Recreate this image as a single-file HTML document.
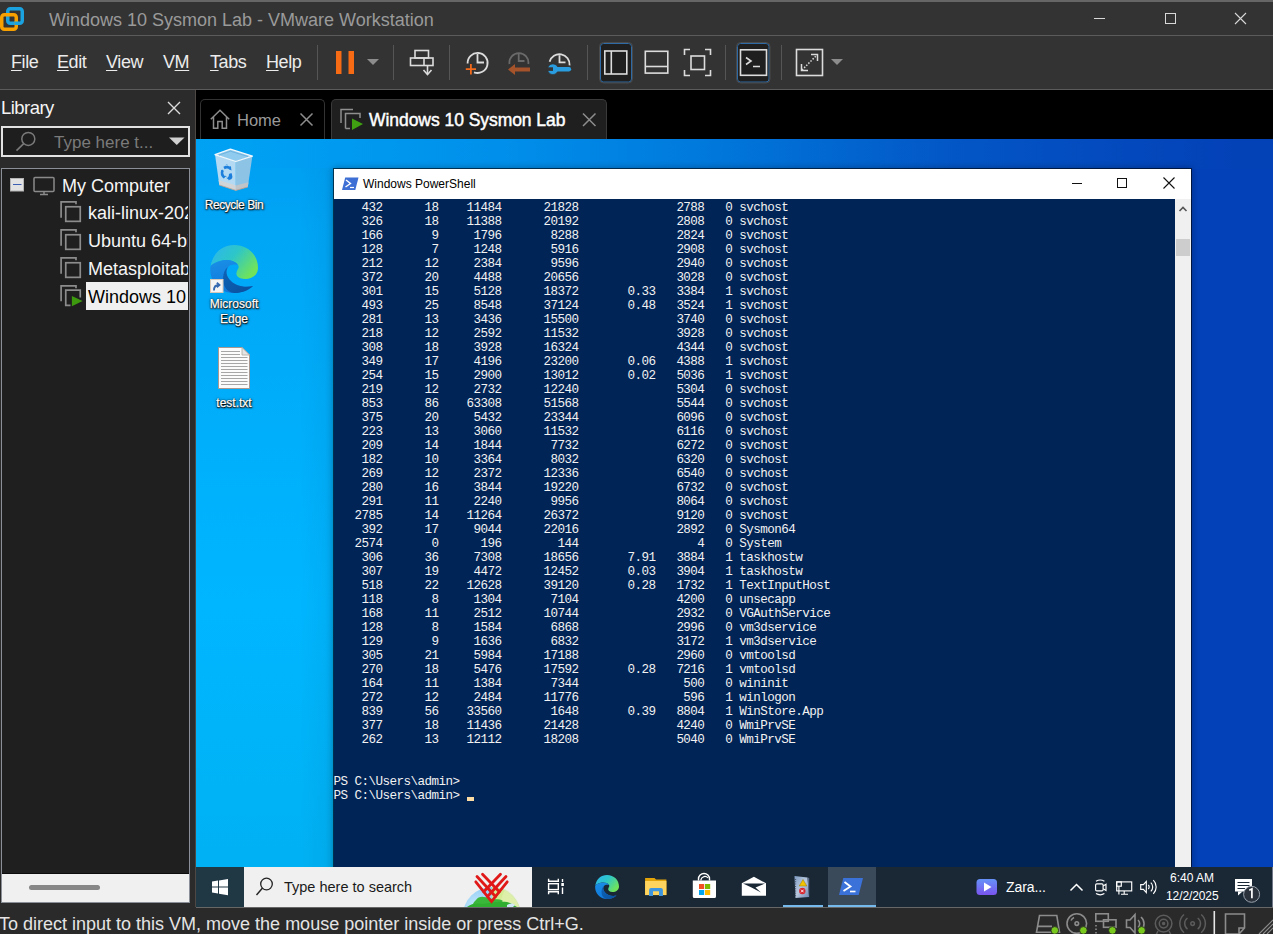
<!DOCTYPE html>
<html><head><meta charset="utf-8">
<style>
*{margin:0;padding:0;box-sizing:border-box}
html,body{width:1273px;height:934px;overflow:hidden;background:#2b2b2b;font-family:"Liberation Sans",sans-serif;position:relative}
.a{position:absolute}
.nw{white-space:nowrap}
svg{position:absolute;overflow:visible}
#title{left:0;top:0;width:1273px;height:36px;background:#333;border-top:2px solid #666;border-bottom:1px solid #5b5b5b}
#ttxt{left:49px;top:10px;font-size:18px;line-height:20px;color:#9a9a9a}
#menu{left:0;top:36px;width:1273px;height:54px;background:#333;border-bottom:1px solid #5b5b5b}
.mi{top:52px;font-size:18px;line-height:20px;color:#ececec;letter-spacing:-0.4px}
.mi u{text-decoration:underline;text-decoration-thickness:1px;text-underline-offset:1.5px}
.sep{width:1px;background:#555;top:45px;height:35px}
#lib{left:0;top:90px;width:190px;height:817px;background:#2b2b2b}
#vmarea{left:196px;top:90px;width:1077px;height:49px;background:#000}
#desk{left:196px;top:139px;width:1077px;height:768px;background:linear-gradient(90deg,#00a2f4 0,#009ef2 94px,#008fea 308px,#0079dc 508px,#0356c6 758px,#0341b7 1038px,#0341b6 1077px);overflow:hidden}
#dleft{left:0;top:29px;width:137px;height:699px;background:linear-gradient(90deg,rgba(0,0,0,0) 75%,rgba(0,10,40,0.05) 100%),linear-gradient(180deg,#00a0f3 0,#00a6f6 66px,#00b6ff 436px,#00b2f4 686px)}
#dright{left:995px;top:30px;width:82px;height:698px;background:#0341b8}
#status{left:0;top:908px;width:1273px;height:26px;background:#2a2a2a}
#ps{left:137px;top:29px;width:859px;height:740px;background:#fff;border:1px solid rgba(0,0,0,.6);background-clip:padding-box;box-shadow:0 0 7px rgba(0,0,0,0.3)}
#con{left:0;top:30px;width:841px;height:710px;background:#012456;overflow:hidden}
#con pre{font-family:"Liberation Mono",monospace;font-size:12.6px;letter-spacing:-0.56px;line-height:14px;color:#f2f2f2;position:absolute;left:-0.5px;top:2px}
#psb{left:841px;top:30px;width:16px;height:710px;background:#f0f0f0}
#task{left:0;top:728px;width:1077px;height:40px;background:#1e2a38}
.dl{color:#fff;font-size:12px;line-height:15px;text-align:center;-webkit-text-stroke:0.25px #fff;text-shadow:0 1px 1px #000,0 0 1px #000,1px 1px 2px rgba(0,0,0,.8),0 0 3px rgba(0,0,0,.5);width:80px}

</style></head><body>
<svg width="0" height="0" style="position:absolute;left:0;top:0">
<defs>
  <linearGradient id="egt" x1="0" y1="0" x2="1" y2="0.6"><stop offset="0" stop-color="#2bb5f2"/><stop offset="0.5" stop-color="#2ec6c8"/><stop offset="1" stop-color="#70e35a"/></linearGradient>
  <linearGradient id="egb" x1="0" y1="0" x2="0.3" y2="1"><stop offset="0" stop-color="#1a8fe6"/><stop offset="1" stop-color="#0f78dc"/></linearGradient>
  <linearGradient id="egd" x1="0" y1="0" x2="1" y2="1"><stop offset="0" stop-color="#0d63b8"/><stop offset="1" stop-color="#0b4f9c"/></linearGradient>
  <symbol id="edge" viewBox="0 0 24 24">
    <path d="M0.3 10.5 C1.5 4 6 0 12 0 C19 0 24 5 24 11.5 C24 15 21 17 17.5 17 C14.5 17 13 15.5 13.2 14 C13.5 12 15 11.5 14 10 C12.5 7.5 8 7 5 8 C3 8.6 1.2 9.5 0.3 10.5 Z" fill="url(#egt)"/>
    <path d="M0.3 10.5 C-0.8 17 4 24 12 24 C15 24 19 23 21.5 20.5 C19 21.2 16 21 13.5 20 C9 18 7 14 9 11 C10 9.8 12 9.5 14 10 C12.5 7.5 8 7 5 8 C3 8.6 1.2 9.5 0.3 10.5 Z" fill="url(#egb)"/>
    <path d="M9 11 C7 14 9 18 13.5 20 C16 21 19 21.2 21.5 20.5 C19 23 15 24.2 12 24 C8.5 23.6 6.3 20.5 6.5 16.5 C6.7 13.8 7.5 12 9 11 Z" fill="url(#egd)"/>
  </symbol>
</defs></svg>
<div id="title" class="a"></div>
<svg style="left:0;top:0" width="30" height="34">
  <rect x="7.75" y="8.75" width="14.5" height="14.5" rx="2.5" fill="none" stroke="#1aa3e0" stroke-width="3.5"/>
  <rect x="1.75" y="14.75" width="14.5" height="14.5" rx="2.5" fill="none" stroke="#f7a000" stroke-width="3.5"/>
  <rect x="14.5" y="21.5" width="4" height="3.5" fill="#1aa3e0"/>
</svg>
<div id="ttxt" class="a nw">Windows 10 Sysmon Lab - VMware Workstation</div>
<svg style="left:1090px;top:10px" width="170" height="18">
  <line x1="4" y1="8.5" x2="15" y2="8.5" stroke="#d8d8d8" stroke-width="1"/>
  <rect x="75.5" y="3.5" width="10" height="10" fill="none" stroke="#d8d8d8" stroke-width="1"/>
  <path d="M145 3 L156 14 M156 3 L145 14" stroke="#d8d8d8" stroke-width="1.1"/>
</svg>
<div id="menu" class="a"></div>
<div class="a mi nw" style="left:11px"><u>F</u>ile</div>
<div class="a mi nw" style="left:57px"><u>E</u>dit</div>
<div class="a mi nw" style="left:106px"><u>V</u>iew</div>
<div class="a mi nw" style="left:163px">V<u>M</u></div>
<div class="a mi nw" style="left:210px"><u>T</u>abs</div>
<div class="a mi nw" style="left:266px"><u>H</u>elp</div>
<div class="a sep" style="left:317px"></div>
<div class="a sep" style="left:393px"></div>
<div class="a sep" style="left:449px"></div>
<div class="a sep" style="left:587px"></div>
<div class="a sep" style="left:725px"></div>
<div class="a sep" style="left:781px"></div>
<!-- toolbar icons -->
<svg style="left:0;top:0" width="1273" height="90">
  <rect x="336" y="51" width="5.5" height="23" fill="#f76b15"/>
  <rect x="348.5" y="51" width="5.5" height="23" fill="#f76b15"/>
  <path d="M367 59 L379 59 L373 65 Z" fill="#8c8c8c"/>
  <g fill="none" stroke="#dcdcdc" stroke-width="1.6">
    <rect x="415" y="50.5" width="13.5" height="7.5"/>
    <rect x="410.5" y="58" width="22.5" height="7.5"/>
    <line x1="424" y1="58" x2="424" y2="65.5"/>
    <line x1="427.5" y1="65.5" x2="427.5" y2="74"/>
    <path d="M423.5 70 L427.5 74.5 L431.5 70"/>
  </g>
  <g fill="none" stroke="#dcdcdc" stroke-width="1.8">
    <path d="M467.6 63.5 A10 10 0 1 1 474 72.3"/>
    <path d="M477.5 54 L477.5 62.5 L484 62.5"/>
  </g>
  <path d="M470.9 64 V74.5 M465.8 69.2 H476" stroke="#f26a1b" stroke-width="1.8"/>
  <g fill="none" stroke="#6a6a6a" stroke-width="1.8">
    <path d="M509.5 64 A9.5 9.5 0 1 1 528.3 64"/>
    <path d="M518.7 53 L518.7 61 L524.5 61"/>
  </g>
  <path d="M530 67.5 H515 V64 L508 69.5 L515 75 V71.5 H530 Z" fill="#a5532a"/>
  <g fill="none" stroke="#dcdcdc" stroke-width="1.8">
    <path d="M549.6 61.8 A10.2 10.2 0 0 1 569.6 65.4"/>
    <path d="M559.5 55.3 V62.4 H565.5"/>
  </g>
  <circle cx="552.9" cy="69.2" r="5.3" fill="#2a9de0" stroke="#333" stroke-width="0.6"/>
  <path d="M553 67.1 H569 A2.15 2.15 0 0 1 569 71.4 H553 Z" fill="#2a9de0"/>
  <rect x="546.5" y="67.3" width="6.5" height="3.6" fill="#333"/>
  <rect x="600.5" y="43.5" width="31" height="38.5" rx="3" fill="#1f1f1f" stroke="#2d6aa6" stroke-width="1"/>
  <rect x="599.5" y="42.5" width="33" height="40.5" rx="4" fill="none" stroke="#4a4a4a" stroke-width="1"/>
  <g fill="none" stroke="#dcdcdc" stroke-width="1.6">
    <rect x="604.8" y="51" width="22" height="23"/>
    <line x1="611.3" y1="51" x2="611.3" y2="74"/>
    <rect x="645.3" y="51.3" width="22.5" height="21.8"/>
    <line x1="645.3" y1="66.5" x2="667.8" y2="66.5"/>
    <path d="M684.5 55 V49.5 H690 M705 49.5 H710.5 V55 M710.5 70 V75.5 H705 M690 75.5 H684.5 V70"/>
    <rect x="691" y="56" width="13.5" height="13.5"/>
  </g>
  <rect x="737.5" y="43.5" width="31.5" height="38.5" rx="3" fill="#1f1f1f" stroke="#2d6aa6" stroke-width="1"/>
  <rect x="736.5" y="42.5" width="33.5" height="40.5" rx="4" fill="none" stroke="#4a4a4a" stroke-width="1"/>
  <g fill="none" stroke="#dcdcdc" stroke-width="1.6">
    <rect x="740.5" y="49.8" width="26" height="25.5"/>
    <path d="M746 57.5 L751 61 L746 64.5 M753 66.5 H760"/>
    <rect x="796.5" y="49.5" width="26" height="26"/>
  </g>
  <path d="M802 70 L817 55" stroke="#dcdcdc" stroke-width="1.5" stroke-dasharray="1.5 1.5" fill="none"/>
  <path d="M801.5 64 V70.5 H808 M811 54.5 H817.5 V61" stroke="#dcdcdc" stroke-width="1.5" fill="none"/>
  <path d="M831 59 L843 59 L837 65 Z" fill="#8c8c8c"/>
</svg>
<div id="lib" class="a"></div>
<div class="a nw" style="left:1px;top:98px;font-size:18.5px;letter-spacing:-0.55px;line-height:20px;color:#f4f4f4">Library</div>
<svg style="left:160px;top:96px" width="30" height="26"><path d="M8 6 L20 18 M20 6 L8 18" stroke="#dcdcdc" stroke-width="1.4"/></svg>
<div class="a" style="left:1px;top:126px;width:189px;height:31px;border:2px solid #e2e2e2;background:#1e1e1e"></div>
<svg style="left:0;top:126px" width="190" height="31">
  <circle cx="28.3" cy="12.9" r="6.5" fill="none" stroke="#7a7a7a" stroke-width="1.5"/>
  <line x1="23.7" y1="17.6" x2="16.5" y2="24.6" stroke="#7a7a7a" stroke-width="1.6"/>
  <path d="M169 11.5 L184.5 11.5 L176.75 19 Z" fill="#d0d0d0"/>
</svg>
<div class="a nw" style="left:54px;top:133px;font-size:17px;line-height:20px;color:#7a7a7a">Type here t...</div>
<div class="a" style="left:1px;top:168px;width:189px;height:735px;border:1px solid #8b8f98;background:#1f1f1f;overflow:hidden">
  <div class="a" style="left:0;top:704px;width:187px;height:29px;background:#f0f0f0;border-top:1px solid #0c0c0c"></div>
  <div class="a" style="left:27px;top:716px;width:71px;height:5px;border-radius:3px;background:#878787"></div>
</div>
<svg style="left:0;top:168px" width="190" height="150">
  <rect x="10.5" y="10.5" width="13" height="12.5" fill="#e2e2e2" stroke="#b5b5b5" stroke-width="1"/>
  <line x1="13" y1="16.5" x2="21.5" y2="16.5" stroke="#3c5fb4" stroke-width="1"/>
  <g fill="none" stroke="#8a8a8a" stroke-width="1.5">
    <rect x="34" y="9.5" width="20" height="14" rx="1"/>
    <path d="M44 23.5 V26 M40 26.5 H48"/>
  </g>
  <g fill="none" stroke="#8c8c8c" stroke-width="1.7">
    <path d="M61.1 49.70 V33.85 H76 V36.30"/><rect x="65.75" y="38.75" width="14.5" height="14.6"/>
    <path d="M61.1 77.70 V61.85 H76 V64.30"/><rect x="65.75" y="66.75" width="14.5" height="14.6"/>
    <path d="M61.1 105.70 V89.85 H76 V92.30"/><rect x="65.75" y="94.75" width="14.5" height="14.6"/>
    <path d="M61.1 133.20 V117.85 H76 V120.30"/><path d="M70.5 137.35 H65.75 V122.15 H80.25 V129.50"/>
  </g>
  <path d="M71.9 127.9 L82.6 133 L71.9 138.2 Z" fill="#3d9a0e"/>
</svg>
<div class="a nw" style="left:62px;top:176px;font-size:18px;line-height:20px;color:#f6f6f6">My Computer</div>
<div class="a" style="left:86px;top:196px;width:102px;height:115px;overflow:hidden">
  <div class="a nw" style="left:2px;top:7px;font-size:18px;line-height:20px;color:#f6f6f6">kali-linux-2024</div>
  <div class="a nw" style="left:2px;top:35px;font-size:18px;line-height:20px;color:#f6f6f6">Ubuntu 64-bit</div>
  <div class="a nw" style="left:2px;top:63px;font-size:18px;line-height:20px;color:#f6f6f6">Metasploitable</div>
  <div class="a" style="left:0;top:86px;width:102px;height:28px;background:#f0f0f0"></div>
  <div class="a nw" style="left:2px;top:91px;font-size:18px;line-height:20px;color:#000">Windows 10 Sysmon</div>
</div>
<div id="vmarea" class="a"></div>
<div class="a" style="left:195px;top:90px;width:1px;height:817px;background:#4e4844"></div>
<!-- tabs -->
<div class="a" style="left:200px;top:99px;width:125px;height:41px;border:1px solid #333;border-bottom:none;border-radius:5px 5px 0 0;background:#000"></div>
<svg style="left:200px;top:99px" width="125" height="40">
  <path d="M10.8 20.3 L20 11.3 L29.2 20.3 M13.5 18 V29.3 H17.8 V22.5 H22.2 V29.3 H26.5 V18" fill="none" stroke="#8d8d8d" stroke-width="1.5"/>
  <path d="M100.5 14.5 L112.5 26.5 M112.5 14.5 L100.5 26.5" stroke="#8d8d8d" stroke-width="1.5"/>
</svg>
<div class="a nw" style="left:237px;top:110px;font-size:16.5px;line-height:20px;color:#9a9a9a">Home</div>
<div class="a" style="left:331px;top:99px;width:276px;height:41px;border:1px solid #3a3a3a;border-bottom:none;border-radius:5px 5px 0 0;background:#1f1f1f"></div>
<svg style="left:331px;top:99px" width="276" height="40">
  <g fill="none" stroke="#8f8f8f" stroke-width="1.5">
    <path d="M10 24 V10.5 H22"/><path d="M14.5 29.5 V14.5 H29 V19"/>
  </g>
  <path d="M21 19.5 L32 25 L21 31 Z" fill="#3fa112"/>
  <path d="M14.5 29.5 H19" stroke="#8f8f8f" stroke-width="1.5"/>
  <path d="M252 14.5 L264.5 27 M264.5 14.5 L252 27" stroke="#8d8d8d" stroke-width="1.5"/>
</svg>
<div class="a nw" style="left:369px;top:110px;font-size:17.5px;line-height:20px;color:#fff;-webkit-text-stroke:0.45px #fff;letter-spacing:-0.05px">Windows 10 Sysmon Lab</div>
<div id="desk" class="a">
  <div id="dleft" class="a"></div>
  <div id="dright" class="a"></div>
  <div id="ps" class="a">
    <div class="a" style="left:0;top:0;width:856px;height:30px;background:#fff"></div>
    <svg style="left:8px;top:8px" width="18" height="14">
      <path d="M3.2 0.5 H16.5 L13.3 13 H0 Z" fill="#3d6fd4"/>
      <path d="M4 3 L8.5 6.5 L3.5 10" fill="none" stroke="#fff" stroke-width="1.4"/>
      <path d="M8 10.5 H12" stroke="#fff" stroke-width="1.2"/>
    </svg>
    <div class="a nw" style="left:29px;top:8px;font-size:12px;line-height:14px;color:#000">Windows PowerShell</div>
    <svg style="left:731px;top:0" width="126" height="30">
      <line x1="7" y1="14.5" x2="17" y2="14.5" stroke="#111" stroke-width="1"/>
      <rect x="52.5" y="9.5" width="9" height="9" fill="none" stroke="#111" stroke-width="1"/>
      <path d="M98.5 8.5 L109.5 19.5 M109.5 8.5 L98.5 19.5" stroke="#111" stroke-width="1.1"/>
    </svg>
    <div id="con" class="a"><pre>    432      18    11484      21828              2788   0 svchost
    326      18    11388      20192              2808   0 svchost
    166       9     1796       8288              2824   0 svchost
    128       7     1248       5916              2908   0 svchost
    212      12     2384       9596              2940   0 svchost
    372      20     4488      20656              3028   0 svchost
    301      15     5128      18372       0.33   3384   1 svchost
    493      25     8548      37124       0.48   3524   1 svchost
    281      13     3436      15500              3740   0 svchost
    218      12     2592      11532              3928   0 svchost
    308      18     3928      16324              4344   0 svchost
    349      17     4196      23200       0.06   4388   1 svchost
    254      15     2900      13012       0.02   5036   1 svchost
    219      12     2732      12240              5304   0 svchost
    853      86    63308      51568              5544   0 svchost
    375      20     5432      23344              6096   0 svchost
    223      13     3060      11532              6116   0 svchost
    209      14     1844       7732              6272   0 svchost
    182      10     3364       8032              6320   0 svchost
    269      12     2372      12336              6540   0 svchost
    280      16     3844      19220              6732   0 svchost
    291      11     2240       9956              8064   0 svchost
   2785      14    11264      26372              9120   0 svchost
    392      17     9044      22016              2892   0 Sysmon64
   2574       0      196        144                 4   0 System
    306      36     7308      18656       7.91   3884   1 taskhostw
    307      19     4472      12452       0.03   3904   1 taskhostw
    518      22    12628      39120       0.28   1732   1 TextInputHost
    118       8     1304       7104              4200   0 unsecapp
    168      11     2512      10744              2932   0 VGAuthService
    128       8     1584       6868              2996   0 vm3dservice
    129       9     1636       6832              3172   1 vm3dservice
    305      21     5984      17188              2960   0 vmtoolsd
    270      18     5476      17592       0.28   7216   1 vmtoolsd
    164      11     1384       7344               500   0 wininit
    272      12     2484      11776               596   1 winlogon
    839      56    33560       1648       0.39   8804   1 WinStore.App
    377      18    11436      21428              4240   0 WmiPrvSE
    262      13    12112      18208              5040   0 WmiPrvSE


PS C:\Users\admin&gt;
PS C:\Users\admin&gt; </pre><div class="a" style="left:133px;top:598px;width:7px;height:4px;background:#fddca4"></div></div>
    <div id="psb" class="a">
      <svg style="left:0;top:0" width="16" height="20"><path d="M4.5 12 L8 8.5 L11.5 12" fill="none" stroke="#555" stroke-width="1.6"/></svg>
      <div class="a" style="left:1px;top:40px;width:14px;height:17px;background:#cdcdcd"></div>
    </div>
  </div>
  <!-- desktop icons -->
  <svg style="left:9px;top:4px" width="50" height="50">
    <path d="M10 11.6 L30.8 18.5 L30.8 47.4 L14.3 42 Z" fill="#b3daf2"/>
    <path d="M30.8 18.5 L47.4 13.1 L42.8 44 L30.8 47.4 Z" fill="#8dc3e5"/>
    <path d="M13.6 37 L30.8 42.6 L30.8 47.4 L14.3 42 Z" fill="#d2d5d8"/>
    <path d="M30.8 42.6 L43.5 39.2 L42.8 44 L30.8 47.4 Z" fill="#bfc4c8"/>
    <path d="M14.3 42 L30.8 47.4 L42.8 44" fill="none" stroke="#b89c8c" stroke-width="0.8"/>
    <path d="M10 11.6 L25.4 6.2 L47.4 13.1 L30.8 18.5 Z" fill="#8fcbee" stroke="#f2f8fc" stroke-width="1.3" stroke-linejoin="round"/>
    <path d="M14 12 L25.4 8.2 L43 13.5" fill="none" stroke="#6fb3df" stroke-width="1"/>
    <g fill="#1c7fdc">
      <path d="M18.5 24.5 L21.5 21.5 L25 24.5 L23.5 26 L26.5 27.5 L25.8 23 L24.2 24.2 L21.8 21 Z"/>
      <path d="M17 26.5 C15.5 28.5 15.5 31 17.5 33 L19 35.5 L20.5 32.5 L22 34.5 L19 33 C17.5 31 17.5 29 18.5 27.5 Z"/>
      <path d="M23.5 32 L26 30.5 C27.5 32 28 34.5 26.5 36 L23.5 37.5 L24.5 36 L21.5 35.5 L25.5 33.5 L24.5 33 Z"/>
    </g>
    <path d="M19 25 A6 6 0 0 1 25.5 25.5 M17.5 27.5 A6 6 0 0 0 19.5 34.5 M25.5 30.5 A6 6 0 0 1 23 36" fill="none" stroke="#1c7fdc" stroke-width="2.6"/>
  </svg>
  <div class="a dl" style="left:-2px;top:59px;letter-spacing:-0.45px">Recycle Bin</div>
  <svg style="left:14px;top:106px" width="48" height="48" viewBox="0 0 24 24"><use href="#edge"/></svg>
  <svg style="left:14px;top:140px" width="14" height="14">
    <rect x="0.5" y="0.5" width="12.5" height="13" fill="#f4f4f4" stroke="#d9c9b9" stroke-width="1"/>
    <path d="M4 11.5 C4 7.5 5.5 6 8.5 6 M6.8 3.8 L9.5 6 L6.8 8.3" fill="none" stroke="#3569b0" stroke-width="1.8"/>
  </svg>
  <div class="a dl" style="left:-2px;top:158px">Microsoft<br>Edge</div>
  <svg style="left:22px;top:208px" width="34" height="44">
    <path d="M0.5 0.5 H24 L31.5 8 V41.5 H0.5 Z" fill="#fbfbfb" stroke="#a89890" stroke-width="1"/>
    <path d="M24 0.5 V8 H31.5 Z" fill="#e4e4e4" stroke="#b0a8a0" stroke-width="0.8"/>
    <g stroke="#a6a6a6" stroke-width="1"><line x1="3" y1="4.5" x2="22" y2="4.5"/><line x1="3" y1="7.5" x2="22" y2="7.5"/><line x1="3" y1="10.5" x2="29.5" y2="10.5"/><line x1="3" y1="13.5" x2="29.5" y2="13.5"/><line x1="3" y1="16.5" x2="29.5" y2="16.5"/><line x1="3" y1="19.5" x2="29.5" y2="19.5"/><line x1="3" y1="22.5" x2="29.5" y2="22.5"/><line x1="3" y1="25.5" x2="29.5" y2="25.5"/><line x1="3" y1="28.5" x2="29.5" y2="28.5"/><line x1="3" y1="31.5" x2="29.5" y2="31.5"/><line x1="3" y1="34.5" x2="29.5" y2="34.5"/><line x1="3" y1="37.5" x2="29.5" y2="37.5"/></g>
  </svg>
  <div class="a dl" style="left:-2px;top:257px">test.txt</div>
</div>
<!-- taskbar -->
<div class="a" style="left:196px;top:867px;width:1077px;height:40px;background:#1a2836"></div>
<div class="a" style="left:196px;top:867px;width:48px;height:40px;background:#203744"></div>
<svg style="left:196px;top:867px" width="1077" height="40">
  <path d="M16 14.6 L22 13.6 V19.6 H16 Z M23 13.4 L32 12 V19.6 H23 Z M16 20.6 H22 V26.6 L16 25.6 Z M23 20.6 H32 V28.2 L23 26.8 Z" fill="#fff"/>
</svg>
<div class="a" style="left:244px;top:867px;width:288px;height:40px;background:#f0f0f0"></div>
<svg style="left:244px;top:867px" width="288" height="40">
  <circle cx="22.5" cy="17" r="5.8" fill="none" stroke="#222" stroke-width="1.3"/>
  <line x1="18.5" y1="21" x2="12.5" y2="28" stroke="#222" stroke-width="1.4"/>
  <defs>
    <radialGradient id="gl" cx="0.25" cy="0.35" r="0.9"><stop offset="0" stop-color="#c8ecfc"/><stop offset="0.45" stop-color="#8cc8f4"/><stop offset="1" stop-color="#5b8fe8"/></radialGradient>
    <linearGradient id="gl2" x1="0" y1="0" x2="1" y2="0"><stop offset="0" stop-color="#e8f4c0" stop-opacity="0"/><stop offset="1" stop-color="#d6ec9a"/></linearGradient>
    <clipPath id="sbclip"><rect x="0" y="0" width="288" height="40"/></clipPath>
  </defs>
  <g clip-path="url(#sbclip)" transform="translate(211,0)">
    <circle cx="36.8" cy="49" r="29" fill="url(#gl)"/>
    <path d="M36.8 20 A29 29 0 0 1 65.8 49 L36.8 49 Z" fill="#d4eb96"/>
    <path d="M50 22 A29 29 0 0 1 65.8 49 L40 49 Z" fill="#e2f1b4" opacity="0.6"/>
    <path d="M21 33 C24 28 30 30 34 31 C38 33 44 31 48 34 C44 38 38 37 34 38 C28 38 24 40 18 40 C17 37 19 35 21 33 Z" fill="#3ab63a"/>
    <path d="M12 40 C16 36 24 36 28 37 C36 36 44 34 52 35 C56 36 60 39 62 40 Z" fill="#2fae2f"/>
    <path d="M52 38 C55 36 58 36 60 38 L58 40 H52 Z" fill="#cfe7f7"/>
  </g>
  <g transform="translate(211,0)" stroke="#e01818" stroke-width="2.8" stroke-linecap="round" fill="none">
    <path d="M20.8 14.8 L36.5 34.5 L52.2 14.8"/>
    <path d="M22 9.5 L40.5 29.5"/>
    <path d="M27.5 7.3 L44.3 24.8"/>
    <path d="M51 9.5 L32.5 29.5"/>
    <path d="M45.5 7.3 L28.7 24.8"/>
  </g>
  <path d="M247.5 35 L232 16 M247.5 35 L263 16" stroke="#e01818" stroke-width="2.8" fill="none" transform="translate(0,0)" opacity="0"/>
</svg>
<div class="a nw" style="left:284px;top:879px;font-size:14.5px;line-height:17px;color:#1a1a1a">Type here to search</div>
<svg style="left:532px;top:867px" width="741" height="40">
  <g fill="none" stroke="#fff" stroke-width="1.4">
    <path d="M16.6 11.8 V14.2 H26.3 V11.8 M16.6 27.2 V24.8 H26.3 V27.2"/>
    <rect x="16.6" y="16.7" width="9.7" height="5.9"/>
    <path d="M30.5 12 V15 M30.5 20.5 V27"/>
  </g>
  <rect x="29.3" y="16" width="2.6" height="3" fill="#fff"/>
  <use href="#edge" x="63" y="8" width="24" height="24"/>
  <g transform="translate(100,0)"><path d="M13.1 11 H22.5 L24 12.5 H34.4 V28.1 H13.1 Z" fill="#e3a40a"/>
  <path d="M13.1 14 H34.4 V28.1 H13.1 Z" fill="#fed45e"/>
  <path d="M17.1 23 A2 2 0 0 1 19.1 21 H28.9 A2 2 0 0 1 30.9 23 V29 H27 V24.3 H21 V29 H17.1 Z" fill="#3d95e0"/></g>
  <path d="M160.8 13.5 H184 V29.4 A1.5 1.5 0 0 1 182.5 30.9 H162.3 A1.5 1.5 0 0 1 160.8 29.4 Z" fill="#fff"/>
  <path d="M166.5 13.5 V12 A5.5 5.5 0 0 1 177.5 12 V13.5" fill="none" stroke="#fff" stroke-width="1.4"/>
  <path d="M169 13.5 V12.5 A4 4 0 0 1 176 11" fill="none" stroke="#fff" stroke-width="1.2"/>
  <rect x="167" y="17" width="5.2" height="5" fill="#f25022"/><rect x="173" y="17" width="5.2" height="5" fill="#7fba00"/>
  <rect x="167" y="23" width="5.2" height="5" fill="#00a4ef"/><rect x="173" y="23" width="5.2" height="5" fill="#ffb900"/>
  <path d="M209.8 16.2 L221.9 9.8 L234 16.2 V28.8 H209.8 Z" fill="#fff"/>
  <path d="M211 16.5 H233 L223.5 20.5 L229 25.5 L219.5 20.5 Z" fill="#1a2836"/>
  <defs><linearGradient id="evg" x1="0" y1="0" x2="1" y2="1"><stop offset="0" stop-color="#7f9cc4"/><stop offset="0.5" stop-color="#b8c8de"/><stop offset="1" stop-color="#7088b0"/></linearGradient></defs>
  <path d="M262.5 9 L275.5 10.5 L277 30 L263.5 31 Z" fill="url(#evg)"/>
  <path d="M275.5 10.5 L277.2 11 V30.5 L277 30 Z" fill="#5a6c8a"/>
  <path d="M263.5 12 V29" stroke="#4d5a70" stroke-width="1.2" stroke-dasharray="1 1.3"/>
  <path d="M271 12.5 L274.8 19 H267.2 Z" fill="#f2c200" stroke="#9a7a00" stroke-width="0.5"/>
  <circle cx="270.3" cy="24" r="3.2" fill="#d8262e"/>
  <path d="M269 22.7 L271.6 25.3 M271.6 22.7 L269 25.3" stroke="#fff" stroke-width="0.9"/>
  <rect x="251" y="38" width="40" height="2" fill="#76b9ed"/>
  <rect x="296" y="0" width="48" height="40" fill="#3b4a5a"/>
  <rect x="296" y="38" width="48" height="2" fill="#76b9ed"/>
  <path d="M311.3 11 H331 L326.7 28 H307 Z" fill="#3b72d9"/>
  <path d="M312.5 15 L318.5 19.5 L311.5 24" fill="none" stroke="#fff" stroke-width="1.8"/>
  <path d="M318 24.5 H323.5" stroke="#fff" stroke-width="1.6"/>
</svg>
<svg style="left:960px;top:867px" width="313" height="40">
  <defs><linearGradient id="za" x1="0" y1="0" x2="0" y2="1"><stop offset="0" stop-color="#6592f7"/><stop offset="1" stop-color="#7a54ef"/></linearGradient></defs>
  <rect x="16.5" y="12" width="20.5" height="16" rx="3.5" fill="url(#za)"/>
  <path d="M24 15.5 L31.5 20 L24 24.5 Z" fill="#fff"/>
  <path d="M110.5 23.5 L116.5 17.5 L122.5 23.5" fill="none" stroke="#fff" stroke-width="1.5"/>
  <g fill="none" stroke="#fff" stroke-width="1.15">
    <rect x="135.6" y="16.9" width="7.5" height="7" rx="1.2"/>
    <path d="M143.1 19 L146 17.3 V23.5 L143.1 21.8"/>
    <path d="M136 14.2 Q140.2 11.8 144.4 14.2 M136 26.6 Q140.2 29 144.4 26.6"/>
    <rect x="156.7" y="14.9" width="15" height="9"/>
    <rect x="156.7" y="14.9" width="4.6" height="4.3"/>
    <path d="M158.9 19.2 V27.5 M164.2 23.9 V27 M161 27.2 H168"/>
    <path d="M180.7 17.6 H183.4 L186.3 14.4 V25.6 L183.4 22.4 H180.7 Z"/>
    <path d="M188.3 18 A2.8 2.8 0 0 1 188.3 22 M190.8 15.6 A6 6 0 0 1 190.8 24.4 M193.3 13.2 A9.5 9.5 0 0 1 193.3 26.8"/>
  </g>
  <rect x="275" y="12" width="17" height="12.5" fill="#fff"/>
  <path d="M278 24.5 V28.5 L282.5 24.5 Z" fill="#fff"/>
  <g stroke="#1a2836" stroke-width="1"><line x1="277.5" y1="15.5" x2="289.5" y2="15.5"/><line x1="277.5" y1="18.5" x2="289.5" y2="18.5"/><line x1="277.5" y1="21.5" x2="285" y2="21.5"/></g>
  <circle cx="291.6" cy="27.3" r="8" fill="#2c323c" stroke="#9aa3ad" stroke-width="1"/>
  <path d="M289.3 23.2 L291.9 21.8 V31.3" fill="none" stroke="#fff" stroke-width="1.7"/>
  <rect x="312" y="0" width="1" height="40" fill="#707888"/>
</svg>
<div class="a nw" style="left:1006px;top:878px;font-size:14px;line-height:18px;color:#fff;letter-spacing:-0.1px">Zara...</div>
<div class="a nw" style="left:1170px;top:871px;font-size:12px;line-height:14px;color:#fff">6:40 AM</div>
<div class="a nw" style="left:1166px;top:889px;font-size:12px;line-height:14px;color:#fff;letter-spacing:-0.1px">12/2/2025</div>
<div class="a" style="left:196px;top:907px;width:1077px;height:1px;background:#676767"></div>
<div id="status" class="a"></div>
<div class="a nw" style="left:-1px;top:913px;font-size:18px;line-height:22px;color:#e4e4e4">To direct input to this VM, move the mouse pointer inside or press Ctrl+G.</div>
<svg style="left:1030px;top:906px" width="243" height="28">
  <g fill="none" stroke="#8c8c8c" stroke-width="1.6">
    <path d="M9.5 9.5 H26.8 L29.5 26.2 H6.5 Z M6.8 20.4 H22"/>
    <circle cx="46.8" cy="17.6" r="9.8"/>
    <circle cx="46.8" cy="17.6" r="1.8"/>
    <path d="M41 14.5 A6.5 6.5 0 0 1 44 11.5"/>
    <rect x="65.8" y="7.8" width="12.5" height="7.5"/>
    <rect x="73.5" y="13.8" width="12.5" height="7.5"/>
    <path d="M66 19 V30 M66 30 H80" stroke-dasharray="1.5 2"/>
    <path d="M96.5 14 H100 L105 8.5 V27 L100 21.5 H96.5 Z"/>
    <path d="M108 14 A5 5 0 0 1 108 21.5 M111 11 A9 9 0 0 1 111 24.5"/>
  </g>
  <g fill="#78c81e" stroke="#262626" stroke-width="0.8">
    <circle cx="24.8" cy="24.4" r="3.8"/>
    <circle cx="53.4" cy="24.4" r="3.8"/>
    <circle cx="82.4" cy="24.4" r="3.8"/>
    <circle cx="111.6" cy="24.4" r="3.8"/>
  </g>
  <g fill="none" stroke="#5c5c5c" stroke-width="1.5">
    <circle cx="133.6" cy="17.6" r="8.3"/>
    <circle cx="133.6" cy="17.6" r="4.3"/>
    <circle cx="133.6" cy="17.6" r="1" fill="#5c5c5c"/>
    <path d="M128 25 L126 29 H141 L139 25"/>
    <circle cx="162.6" cy="17.6" r="1.8"/>
    <path d="M157.5 12 A7 7 0 0 0 157.5 23.2 M167.7 12 A7 7 0 0 1 167.7 23.2 M154 8.5 A12 12 0 0 0 154 26.7 M171.2 8.5 A12 12 0 0 1 171.2 26.7"/>
  </g>
  <rect x="183.5" y="5" width="1.6" height="23" fill="#e6e6e6"/>
  <path d="M195.5 8 H214.5 V22 L209 28 H195.5 Z M214.5 22 H209 V28" fill="none" stroke="#8c8c8c" stroke-width="1.6"/>
  <g stroke="#8c8c8c" stroke-width="1.2"><path d="M229 28 L243 14 M233 28 L243 18 M237 28 L243 22"/></g>
</svg>

</body></html>
